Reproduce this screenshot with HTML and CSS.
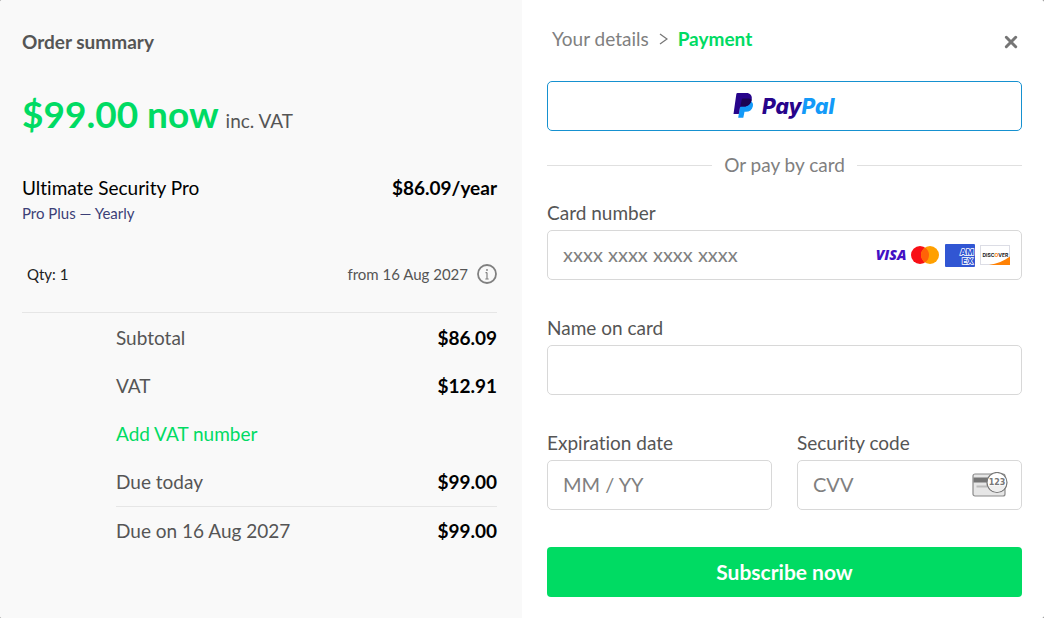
FILE: index.html
```html
<!DOCTYPE html>
<html lang="en">
<head>
<meta charset="utf-8">
<meta name="viewport" content="width=device-width, initial-scale=1">
<title>Checkout</title>
<link rel="stylesheet" href="styles.css">
</head>
<body>
<main class="checkout">
  <section class="summary">
    <h1 class="summary-title">Order summary</h1>
    <p class="price"><strong class="price-now">$99.00 now</strong> <span>inc. VAT</span></p>
    <div class="item">
      <span>Ultimate Security Pro</span>
      <strong>$86.09/year</strong>
    </div>
    <p class="plan">Pro Plus — Yearly</p>
    <div class="meta">
      <span class="qty">Qty: 1</span>
      <span class="renewal">from 16 Aug 2027
        <button class="icon-button" type="button" aria-label="Renewal information">
          <svg width="20" height="20" viewBox="0 0 20 20" fill="none" stroke="#808080"><circle cx="10" cy="10" r="9" stroke-width="1.8"/><path d="M10 8.500v6.500M8.500 8.700H10M8.300 15h3.400" stroke-width="1.200"/><circle cx="10" cy="6" r=".9" fill="#808080" stroke="none"/></svg>
        </button>
      </span>
    </div>
    <dl class="totals">
      <div class="total"><dt>Subtotal</dt><dd>$86.09</dd></div>
      <div class="total"><dt>VAT</dt><dd>$12.91</dd></div>
      <div class="total"><dt><a class="link" href="#vat">Add VAT number</a></dt></div>
      <div class="total"><dt>Due today</dt><dd>$99.00</dd></div>
      <div class="total total-next"><dt>Due on 16 Aug 2027</dt><dd>$99.00</dd></div>
    </dl>
  </section>

  <section class="payment">
    <header class="payment-header">
      <nav class="steps" aria-label="Checkout steps">
        <a class="step" href="#details">Your details</a>
        <svg width="9" height="12" viewBox="0 0 9 12" fill="none" stroke="#777" stroke-width="1.3"><path d="M1 1 8 6 1 11"/></svg>
        <a class="step step-current" href="#payment" aria-current="step">Payment</a>
      </nav>
      <button class="icon-button close" type="button" aria-label="Close">
        <svg width="14" height="14" viewBox="0 0 14 14" stroke="#757575" stroke-width="3" stroke-linecap="round"><path d="M2.300 2.300l9.400 9.400M11.700 2.300l-9.400 9.400"/></svg>
      </button>
    </header>

    <button class="paypal" type="button" aria-label="PayPal">
      <svg width="104" height="28" viewBox="0 0 104 28">
        <path fill="#139af8" d="M17 8.500C19.700 9.800 20.500 12 19.800 14.500 19 18 16.500 19.800 13 19.800H11.500L10.300 25.800H5.200L7.300 13Z"/>
        <path fill="#27048b" d="M4.500 1H13.500C17 1 19.500 3.500 18.700 7.500 18 11.800 15 14.500 11 14.500H8.200C7.500 14.500 7.100 14.900 7 15.600L5.800 22H.5L3.300 2.200C3.400 1.400 3.800 1 4.500 1Z"/>
        <path fill="#1b0452" d="M8.800 7.300C9 6.700 9.400 6.500 10 6.500H14.500C16.300 6.500 17.800 7 18.700 7.700 18 11.900 15 14.500 11 14.500H8.200C7.800 14.500 7.500 14.700 7.300 15Z"/>
        <text class="paypal-word" x="29" y="22" fill="#27048b">Pay<tspan fill="#139af8">Pal</tspan></text>
      </svg>
    </button>

    <p class="divider">Or pay by card</p>

    <form class="form">
      <div class="field">
        <label for="number">Card number</label>
        <div class="control">
          <input id="number" type="text" inputmode="numeric" placeholder="xxxx xxxx xxxx xxxx">
          <div class="cards">
            <svg width="32" height="22" viewBox="0 0 32 22"><text class="visa-word" x="17" y="16" text-anchor="middle" fill="#4310c4">VISA</text></svg>
            <svg width="29" height="22" viewBox="0 0 29 22"><circle cx="9" cy="11" r="9" fill="#f80f16"/><circle cx="19" cy="11" r="9" fill="#ffa000"/><path d="M14 3.500a9 9 0 0 1 0 15 9 9 0 0 1 0-15Z" fill="#ff6207"/></svg>
            <svg width="30" height="23" viewBox="0 0 30 23"><rect width="30" height="23" rx="1" fill="#3156d3"/><g class="amex-word" fill="#3156d3" stroke="#fff" stroke-width="1.400" paint-order="stroke"><text x="15" y="11">AM</text><text x="17" y="20">EX</text></g></svg>
            <svg width="30" height="20" viewBox="0 0 30 20"><rect x=".5" y=".5" width="29" height="19" fill="#fff" stroke="#dcdde5"/><path d="M30 11.500V20H9C17 18.500 24 16 30 11.500Z" fill="#ff8205"/><text class="discover-word" x="2.500" y="11.500" fill="#222">DISC<tspan fill="#ff8205">O</tspan>VER</text></svg>
          </div>
        </div>
      </div>
      <div class="field">
        <label for="name">Name on card</label>
        <div class="control"><input id="name" type="text"></div>
      </div>
      <div class="field-row">
        <div class="field">
          <label for="expiry">Expiration date</label>
          <div class="control"><input id="expiry" type="text" placeholder="MM / YY"></div>
        </div>
        <div class="field">
          <label for="code">Security code</label>
          <div class="control">
            <input id="code" type="text" inputmode="numeric" placeholder="CVV">
            <svg width="38" height="26" viewBox="0 0 38 26"><rect x="1" y="2" width="32" height="22" rx="2" fill="#e6e6e6" stroke="#8a8a8a" stroke-width="1.200"/><path d="M1.500 5.500H20v5H1.500Z" fill="#757575"/><path d="M4.500 14.500H15" stroke="#bbb" stroke-width="2"/><circle cx="25" cy="10.500" r="10" fill="#fff" stroke="#777" stroke-width="1.200"/><path d="M16.500 13.500h17a9 9 0 0 1-17 0Z" fill="#eee"/><text class="code-word" x="25" y="13" text-anchor="middle" fill="#777">123</text></svg>
          </div>
        </div>
      </div>
      <button class="submit" type="submit">Subscribe now</button>
    </form>
  </section>
</main>
</body>
</html>
```
FILE: styles.css
```css
* { box-sizing: border-box; }
html { background: #777; }
body, h1, p, dl, dd { margin: 0; }
body, button, input {
  font-family: Lato, "Liberation Sans", sans-serif;
  font-size: 19px;
  font-variant-ligatures: none;
  line-height: 24px;
}
body { color: #555; }
a { text-decoration: none; }
button { border: 0; cursor: pointer; }
svg { display: block; flex: none; }

.checkout {
  display: grid;
  grid-template-columns: minmax(0, 1fr) minmax(0, 1fr);
  min-height: 100vh;
  border-radius: 2px;
  overflow: hidden;
  background: #fff;
}

.summary { padding: 30px 25px 30px 22px; background: #f9f9f9; }
.summary-title { font-size: 19px; font-weight: 700; }
.price { display: flex; align-items: baseline; gap: 7px; margin-top: 36px; }
.price-now { font-size: 37px; line-height: 48px; color: #00db63; }
.item {
  display: flex;
  justify-content: space-between;
  margin-top: 38px;
  color: #000;
}
.plan { margin-top: 3px; font-size: 15px; line-height: 20px; color: #3c3f77; }
.meta {
  display: flex;
  justify-content: space-between;
  align-items: center;
  margin-top: 39px;
  padding: 0 0 26px 5px;
  border-bottom: 1px solid #e6e6e6;
  font-size: 15px;
}
.qty { color: #222; }
.renewal { display: flex; align-items: center; gap: 9px; }
.icon-button { padding: 0; background: none; }

.totals { margin: 1px 0 0 94px; }
.total {
  display: flex;
  justify-content: space-between;
  padding: 12px 0;
}
.total dd { font-weight: 700; color: #000; }
.total-next { border-top: 1px solid #e6e6e6; }
.link { color: #00db63; }

.payment { padding: 27px 22px 21px 25px; }
.payment-header {
  display: flex;
  justify-content: space-between;
  align-items: center;
  padding: 0 4px 0 5px;
}
.steps { display: flex; align-items: center; gap: 10px; }
.step { color: #808080; }
.step-current { font-weight: 700; color: #00db63; }
.close { padding-top: 5px; }

.paypal {
  display: flex;
  justify-content: center;
  align-items: center;
  width: 100%;
  height: 50px;
  margin-top: 30px;
  border: 1px solid #1691d0;
  border-radius: 5px;
  background: #fff;
}
.paypal-word { font: italic 800 21px Inter, sans-serif; }

.divider {
  display: flex;
  align-items: center;
  gap: 12px;
  margin-top: 22px;
  color: #808080;
}
.divider::before, .divider::after {
  content: "";
  flex: 1;
  height: 1px;
  background: #e0e0e0;
}

.form {
  display: grid;
  grid-template-columns: minmax(0, 1fr);
  gap: 36px;
  margin-top: 24px;
}
.field { display: grid; grid-template-columns: minmax(0, 1fr); gap: 5px; }
.field-row {
  display: grid;
  grid-template-columns: repeat(2, minmax(0, 1fr));
  gap: 25px;
}
.control {
  display: flex;
  align-items: center;
  height: 50px;
  padding: 0 11px 0 15px;
  border: 1px solid #d8d8d8;
  border-radius: 5px;
  background: #fff;
}
.control input {
  flex: 1;
  min-width: 0;
  padding: 0 0 2px;
  border: 0;
  outline: 0;
  background: none;
  font-size: 20px;
  color: #555;
}
.control input::placeholder { color: #808080; opacity: 1; }
.cards { display: flex; align-items: center; gap: 5px; }
.visa-word { font: italic 900 14px "Open Sans", sans-serif; }
.amex-word { font: 800 8px Inter, sans-serif; }
.discover-word { font: 700 5px Inter, sans-serif; }
.code-word { font: 700 8px "DejaVu Sans", sans-serif; }

.submit {
  height: 50px;
  margin-top: 1px;
  border-radius: 4px;
  background: #00db63;
  color: #fff;
  font-size: 21px;
  font-weight: 700;
}
```
